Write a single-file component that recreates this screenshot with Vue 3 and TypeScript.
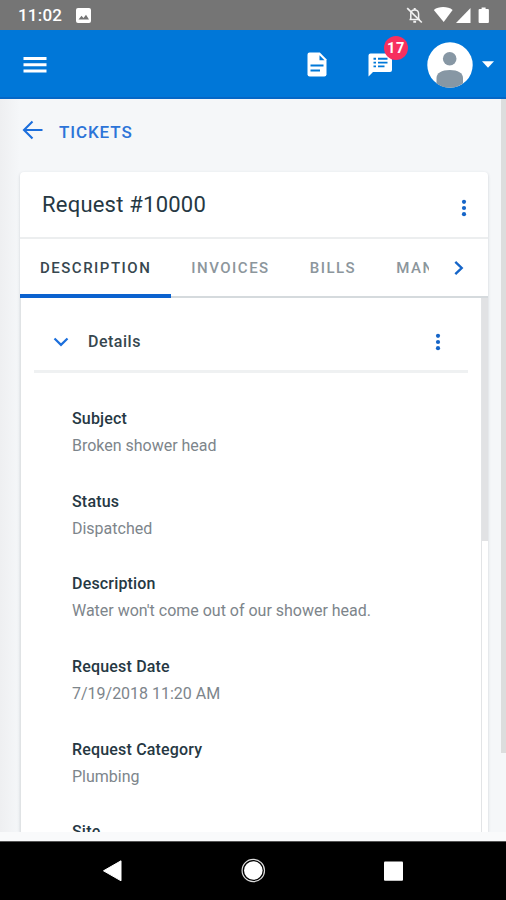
<script setup lang="ts">
interface Field {
  label: string
  value: string
}

const tabs: string[] = ['DESCRIPTION', 'INVOICES', 'BILLS', 'MANAGE']
const activeTab = 'DESCRIPTION'
const unread = 17

const fields: Field[] = [
  { label: 'Subject', value: 'Broken shower head' },
  { label: 'Status', value: 'Dispatched' },
  { label: 'Description', value: "Water won't come out of our shower head." },
  { label: 'Request Date', value: '7/19/2018 11:20 AM' },
  { label: 'Request Category', value: 'Plumbing' },
  { label: 'Site', value: '' },
]
</script>

<template>
  <div class="screen">
    <div class="status-bar">
      <span class="clock">11:02</span>
      <svg class="status-picture" width="15" height="15" viewBox="0 0 15 15">
        <rect width="15" height="15" rx="2" fill="#fff" />
        <path d="M2.5 11.5l3-3.7 2 2.3 2.500-3.400 3 4.800z" fill="#757575" />
      </svg>
      <svg class="status-icons" width="84" height="20" viewBox="0 0 84 20">
        <g fill="none" stroke="#f2f2f2" stroke-width="1.5">
          <path d="M3.500 14.500h10.500M4.800 14V9c0-2.400 1.700-4 3.900-4s3.900 1.600 3.900 4v5" />
          <path d="M8.700 3v2M7.300 16.700h2.800" stroke-width="2" />
          <path d="M1.200 3.200l14.600 14.300" stroke-width="1.700" />
        </g>
        <path d="M27.800 4.900c4.800-3.700 14-3.700 18.800 0L37.700 17z" fill="#fff" />
        <path d="M50 18L64.500 3v15z" fill="#fff" />
        <path d="M75.600 2.500h4V4h2.300q1 0 1 1v12q0 1-1 1h-8.300q-1 0-1-1V5q0-1 1-1h2z" fill="#fff" />
      </svg>
    </div>

    <header class="app-bar">
      <svg class="menu" width="24" height="18" viewBox="0 0 24 18">
        <path d="M.5 2.500h23M.5 8.700h23M.5 14.900h23" stroke="#fff" stroke-width="3" />
      </svg>
      <svg class="doc" width="20" height="25" viewBox="0 0 20 25">
        <path d="M2.500.5h10.300L19.500 7.300V22.300q0 2.200-2.200 2.200H2.700Q.5 24.500.5 22.300V2.700Q.5.5 2.500.5z" fill="#fff" />
        <path d="M12.500 3.200v5H17.500z" fill="#0078d8" />
        <path d="M3.500 13.500h13M3.500 18.500h9.500" stroke="#0078d8" stroke-width="1.800" />
      </svg>
      <div class="messages">
        <svg width="25" height="24" viewBox="0 0 25 24">
          <path d="M2.500.5h19.500q2 0 2 2v14.500q0 2-2 2H5L.5 23.500v-21q0-2 2-2z" fill="#fff" />
          <path d="M5.500 5.800H8M5.500 9.600H8M5.500 13.400H8M10 5.800h9.500M10 9.600h9.500M10 13.400h6.500" stroke="#0078d8" stroke-width="1.900" />
        </svg>
        <span class="badge">{{ unread }}</span>
      </div>
      <svg class="avatar" width="46" height="46" viewBox="0 0 46 46">
        <circle cx="23" cy="23" r="22.700" fill="#fff" />
        <circle cx="22.700" cy="16.800" r="6.800" fill="#8797a4" />
        <path d="M9.500 41.500V36c0-5 5-8 13.300-8S36 31 36 36v5.500A23 23 0 0 1 9.500 41.500z" fill="#8797a4" />
      </svg>
      <svg class="caret" width="12" height="7" viewBox="0 0 12 7">
        <path d="M0 .3h12L6 6.700z" fill="#fff" />
      </svg>
    </header>

    <main class="page">
      <div class="column">
        <a class="back">
          <svg width="22" height="20" viewBox="0 0 22 20">
            <path d="M20.500 10H2M10.500 1.500L2 10l8.500 8.500" fill="none" stroke="#1c6fdc" stroke-width="2.100" />
          </svg>
          <span>TICKETS</span>
        </a>

        <section class="card">
          <div class="card-head">
            <h1>Request #10000</h1>
            <svg class="dots" width="6" height="18" viewBox="0 0 6 18">
              <g fill="#1565c8"><circle cx="3" cy="2.800" r="2.100" /><circle cx="3" cy="9" r="2.100" /><circle cx="3" cy="15.200" r="2.100" /></g>
            </svg>
          </div>

          <nav class="tabs">
            <div class="tab-strip">
              <span v-for="tab in tabs" :key="tab" class="tab" :class="{ active: tab === activeTab }">{{ tab }}</span>
            </div>
            <svg class="next" width="10" height="16" viewBox="0 0 10 16">
              <path d="M1.300 1.800L7.700 8l-6.400 6.200" fill="none" stroke="#1565c8" stroke-width="2.400" />
            </svg>
          </nav>

          <div class="panel">
            <div class="panel-content">
              <div class="group-head">
                <svg class="chevron" width="16" height="10" viewBox="0 0 16 10">
                  <path d="M1.500 1.500L8 7.900l6.500-6.400" fill="none" stroke="#1c6fdc" stroke-width="2.200" />
                </svg>
                <h2>Details</h2>
                <svg class="dots" width="6" height="18" viewBox="0 0 6 18">
                  <g fill="#1565c8"><circle cx="3" cy="2.800" r="2.100" /><circle cx="3" cy="9" r="2.100" /><circle cx="3" cy="15.200" r="2.100" /></g>
                </svg>
              </div>
              <dl class="fields">
                <div v-for="field in fields" :key="field.label" class="field">
                  <dt>{{ field.label }}</dt>
                  <dd>{{ field.value }}</dd>
                </div>
              </dl>
            </div>
            <div class="panel-scroll"><div class="panel-thumb"></div></div>
          </div>
        </section>
      </div>
      <div class="page-scroll"><div class="page-thumb"></div></div>
    </main>

    <div class="page-end"></div>

    <footer class="nav-bar">
      <svg width="506" height="58" viewBox="0 0 506 58">
        <path d="M103.500 28.800L121 18.800v20z" fill="#fff" stroke="#fff" stroke-linejoin="round" />
        <circle cx="253.300" cy="28.500" r="11.200" fill="none" stroke="#ddd" stroke-width="1.200" />
        <circle cx="253.300" cy="28.500" r="9.300" fill="#fff" />
        <rect x="384" y="19.500" width="19" height="19.200" rx="1" fill="#fff" />
      </svg>
    </footer>
  </div>
</template>

<style>
body {
  margin: 0;
  overflow: hidden;
}
</style>

<style scoped>
.screen {
  width: 506px;
  height: 900px;
  display: flex;
  flex-direction: column;
  overflow: hidden;
  font-family: Roboto, 'Liberation Sans', sans-serif;
  background: #f5f7f9;
}
.screen svg {
  display: block;
  flex: none;
}
.status-bar {
  flex: none;
  height: 30px;
  display: flex;
  align-items: center;
  padding: 0 16px 0 18px;
  box-sizing: border-box;
  background: #757575;
}
.clock {
  width: 58px;
  color: #fff;
  font-size: 17px;
  font-weight: 500;
  letter-spacing: 0.2px;
  line-height: 32px;
}
.status-icons {
  margin-left: auto;
}
.app-bar {
  flex: none;
  height: 69px;
  display: flex;
  align-items: center;
  box-sizing: border-box;
  padding: 2px 12px 0 23px;
  background: #0077d8;
  border-bottom: 2px solid #0567c6;
}
.menu {
  margin-right: auto;
}
.doc {
  margin-right: 41px;
}
.messages {
  position: relative;
  margin-right: 34px;
}
.badge {
  position: absolute;
  left: 16px;
  top: -17px;
  width: 24px;
  height: 24px;
  border-radius: 50%;
  background: #f7305f;
  color: #fff;
  font-size: 14.500px;
  font-weight: 700;
  letter-spacing: 0.8px;
  line-height: 25px;
  text-align: center;
}
.avatar {
  margin-right: 9px;
}
.page {
  flex: none;
  height: 733px;
  display: flex;
  overflow: hidden;
  background: linear-gradient(90deg, #eeeff1 0, #f5f7f9 20px);
}
.column {
  flex: 1;
  display: flex;
  flex-direction: column;
  padding: 0 13px 0 20px;
}
.back {
  flex: none;
  height: 73px;
  box-sizing: border-box;
  padding: 0 0 11px 2px;
  display: flex;
  align-items: center;
  gap: 15px;
  color: #2c74d8;
  font-size: 17px;
  font-weight: 500;
  letter-spacing: 0.9px;
}
.back span {
  padding-top: 3px;
}
.card {
  flex: 1;
  display: flex;
  flex-direction: column;
  background: #fff;
  border-radius: 4px 4px 0 0;
  box-shadow: 0 1px 3px rgba(60, 70, 80, 0.22);
}
.card-head {
  flex: none;
  height: 67px;
  box-sizing: border-box;
  display: flex;
  align-items: center;
  justify-content: space-between;
  padding: 0 21px 0 22px;
  border-bottom: 2px solid #eceeef;
}
h1 {
  margin: 0;
  color: #263843;
  font-size: 22px;
  font-weight: 400;
  letter-spacing: 0.22px;
}
.card-head .dots {
  margin-top: 6px;
}
.tabs {
  flex: none;
  height: 59px;
  box-sizing: border-box;
  display: flex;
  align-items: center;
  border-bottom: 2px solid #d5dadd;
}
.tab-strip {
  width: 409px;
  height: 59px;
  display: flex;
  overflow: hidden;
  align-self: flex-start;
}
.tab {
  flex: none;
  box-sizing: border-box;
  height: 59px;
  padding: 0 20px;
  color: #8c969c;
  font-size: 15px;
  font-weight: 500;
  letter-spacing: 1.500px;
  line-height: 59px;
}
.tab.active {
  color: #37474f;
  border-bottom: 4px solid #0b62cf;
}
.next {
  margin-left: 25px;
}
.panel {
  flex: none;
  height: 534px;
  display: flex;
}
.panel-content {
  flex: 1;
  padding-left: 13px;
  padding-right: 13px;
  border-left: 1px solid #e0e3e5;
}
.group-head {
  height: 75px;
  box-sizing: border-box;
  border-bottom: 3px solid #eff1f2;
  display: flex;
  align-items: center;
  padding: 15px 27px 0 19px;
}
h2 {
  flex: 1;
  margin: 0 0 0 19px;
  color: #37474f;
  font-size: 16px;
  font-weight: 500;
  letter-spacing: 0.5px;
}
.group-head .dots {
  margin-top: 1px;
}
.fields {
  margin: 0;
  padding: 33px 0 0 38px;
}
.field {
  height: 82.700px;
}
dt {
  color: #263843;
  font-size: 16px;
  font-weight: 500;
  letter-spacing: 0.18px;
  line-height: 26px;
}
dd {
  margin: 0;
  color: #7d858b;
  font-size: 16px;
  letter-spacing: -0.01px;
  line-height: 27px;
}
.panel-scroll {
  width: 7px;
  box-sizing: border-box;
  border-left: 1px solid #e2e4e6;
}
.panel-thumb {
  height: 243px;
  background: #e1e2e4;
}
.page-scroll {
  width: 5px;
}
.page-thumb {
  height: 654px;
  background: #dcdddd;
}
.page-end {
  flex: none;
  height: 9px;
  background: #f9fafb;
}
.nav-bar {
  flex: none;
  height: 59px;
  box-sizing: border-box;
  border-top: 1px solid #555;
  background: #000;
}
</style>
